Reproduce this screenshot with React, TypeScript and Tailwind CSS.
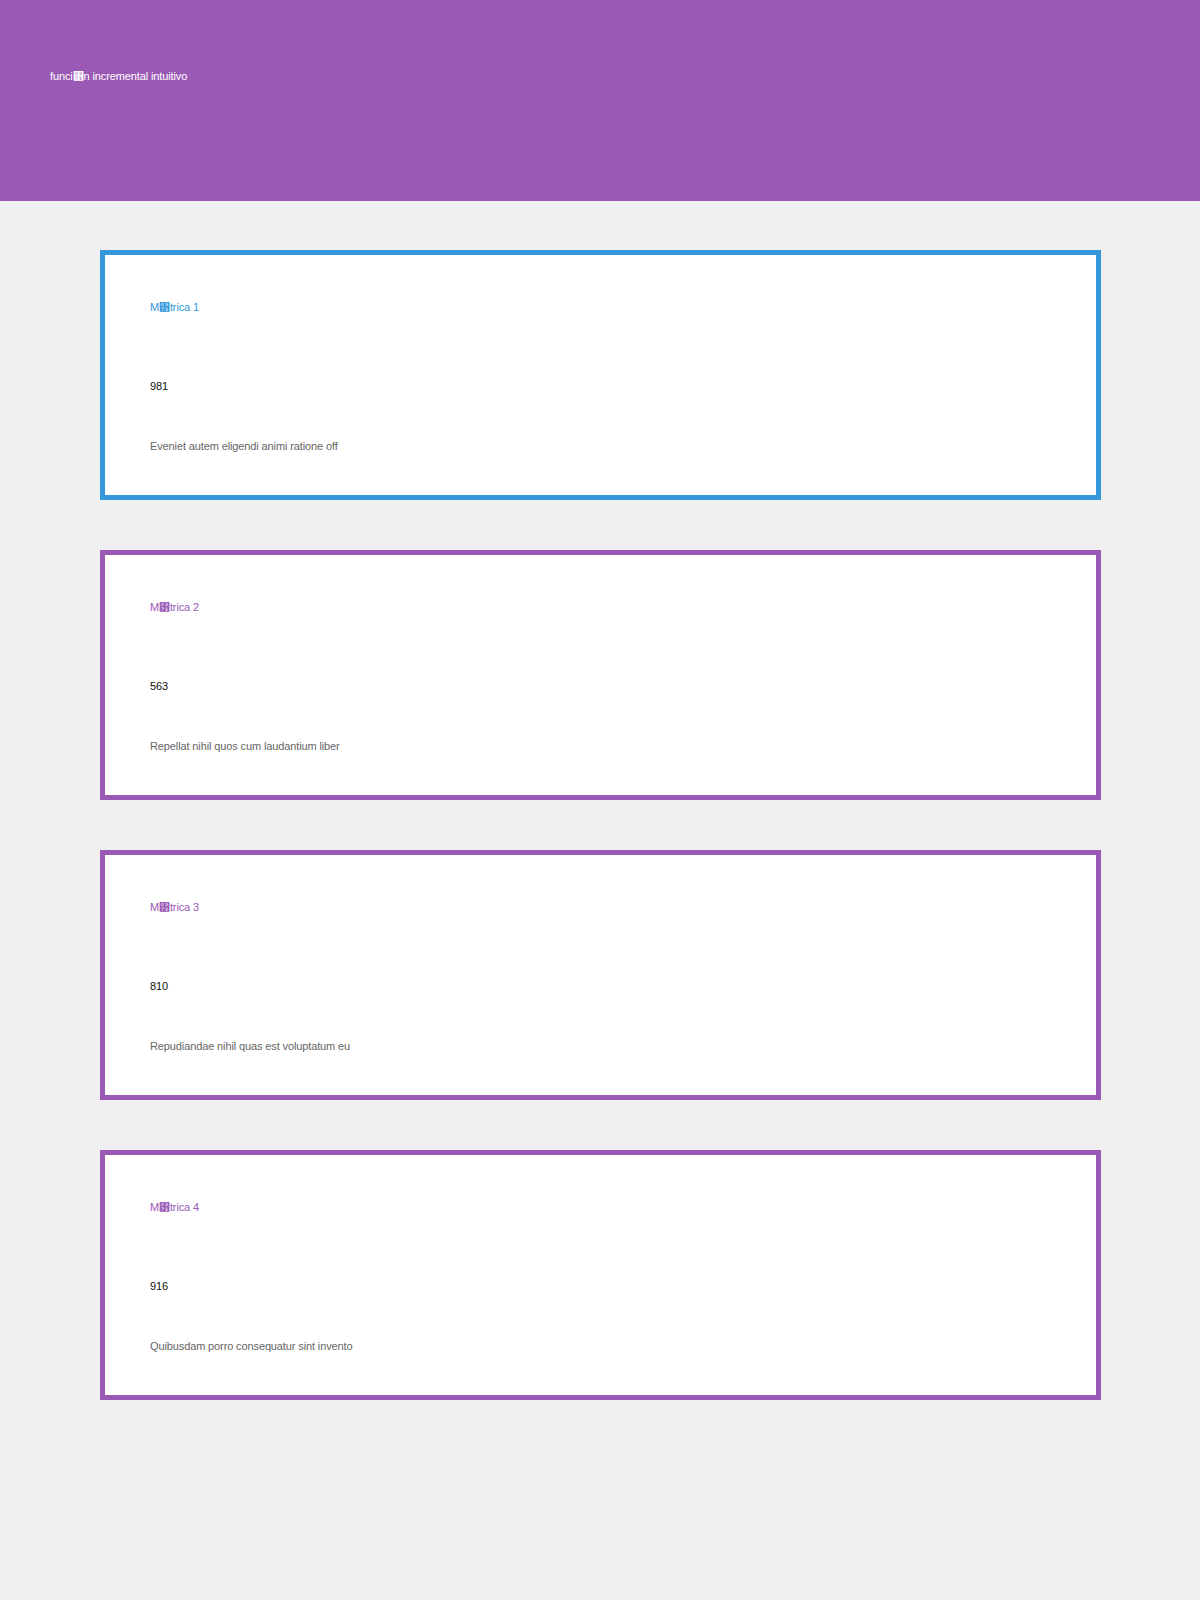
const bad = '\u0378';

const metrics = [
  { label: `M${bad}trica 1`, value: '981', text: 'Eveniet autem eligendi animi ratione off', accent: true },
  { label: `M${bad}trica 2`, value: '563', text: 'Repellat nihil quos cum laudantium liber', accent: false },
  { label: `M${bad}trica 3`, value: '810', text: 'Repudiandae nihil quas est voluptatum eu', accent: false },
  { label: `M${bad}trica 4`, value: '916', text: 'Quibusdam porro consequatur sint invento', accent: false },
];

export default function App() {
  return (
    <div className="min-h-[1600px] bg-[#f0f0f0] font-['Liberation_Sans',sans-serif] text-[11px] tracking-[-0.12px]">
      <header className="h-[201px] bg-[#9b59b6] px-[50px] pt-[69px] text-white">
        <h1 className="leading-[14px]">{`funci${bad}n incremental intuitivo`}</h1>
      </header>

      <main className="flex flex-col gap-[50px] px-[100px] pt-[49px]">
        {metrics.map((m) => (
          <section
            key={m.label}
            className={
              'h-[250px] w-[1001px] border-[5px] bg-white px-[45px] pt-[45px] ' +
              (m.accent ? 'border-[#3498db]' : 'border-[#9b59b6]')
            }
          >
            <h3 className={'leading-[14px] ' + (m.accent ? 'text-[#3498db]' : 'text-[#9b59b6]')}>{m.label}</h3>
            <div className="mt-[65px] leading-[14px] text-[#111]">{m.value}</div>
            <p className="mt-[46px] leading-[14px] text-[#666]">{m.text}</p>
          </section>
        ))}
      </main>
    </div>
  );
}
